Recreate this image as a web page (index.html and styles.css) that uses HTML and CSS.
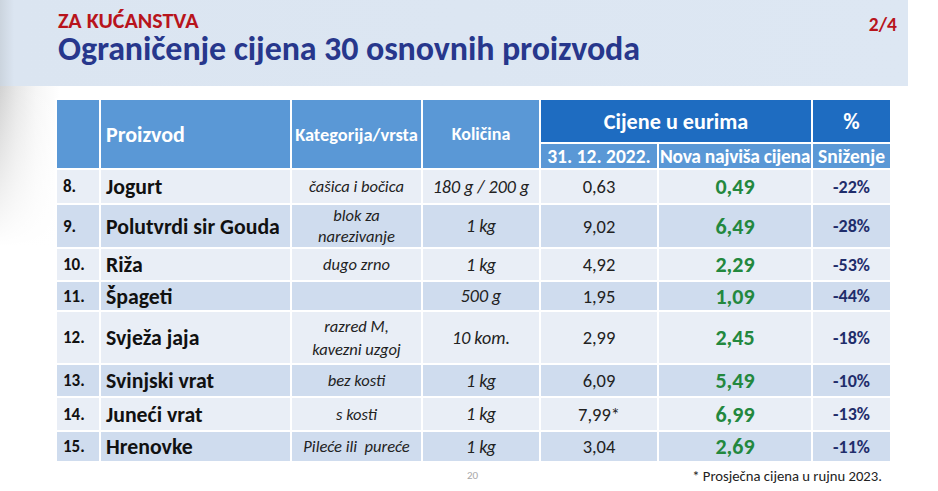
FILE: index.html
```html
<!DOCTYPE html>
<html lang="hr">
<head>
<meta charset="utf-8">
<title>Ograničenje cijena 30 osnovnih proizvoda</title>
<link rel="stylesheet" href="styles.css">
</head>
<body>
<div class="slide">
  <header class="band">
    <div class="titles">
      <div class="kicker">ZA KUĆANSTVA</div>
      <h1 class="title">Ograničenje cijena 30 osnovnih proizvoda</h1>
    </div>
    <div class="pager">2/4</div>
  </header>

  <table class="prices">
    <colgroup>
      <col class="c-num"><col class="c-name"><col class="c-cat"><col class="c-qty">
      <col class="c-old"><col class="c-new"><col class="c-pct">
    </colgroup>
    <thead>
      <tr class="h1row">
        <th rowspan="2" class="hl"></th>
        <th rowspan="2" class="hl h-name">Proizvod</th>
        <th rowspan="2" class="hl h-cat">Kategorija/vrsta</th>
        <th rowspan="2" class="hl h-qty">Količina</th>
        <th colspan="2" class="hd h-big">Cijene u eurima</th>
        <th class="hd h-pct">%</th>
      </tr>
      <tr class="h2row">
        <th class="hs">31. 12. 2022.</th>
        <th class="hs hs-tight">Nova najviša cijena</th>
        <th class="hs">Sniženje</th>
      </tr>
    </thead>
    <tbody>
      <tr class="light r35">
        <td class="num">8.</td><td class="name">Jogurt</td><td class="cat">čašica i bočica</td>
        <td class="qty">180 g / 200 g</td><td class="old">0,63</td><td class="new">0,49</td><td class="pct">-22%</td>
      </tr>
      <tr class="dark r43">
        <td class="num">9.</td><td class="name">Polutvrdi sir Gouda</td><td class="cat">blok za<br>narezivanje</td>
        <td class="qty">1 kg</td><td class="old">9,02</td><td class="new">6,49</td><td class="pct">-28%</td>
      </tr>
      <tr class="light r33">
        <td class="num">10.</td><td class="name">Riža</td><td class="cat">dugo zrno</td>
        <td class="qty">1 kg</td><td class="old">4,92</td><td class="new">2,29</td><td class="pct">-53%</td>
      </tr>
      <tr class="dark r30">
        <td class="num">11.</td><td class="name">Špageti</td><td class="cat"></td>
        <td class="qty">500 g</td><td class="old">1,95</td><td class="new">1,09</td><td class="pct">-44%</td>
      </tr>
      <tr class="light r53">
        <td class="num">12.</td><td class="name">Svježa jaja</td><td class="cat cat-tall">razred M,<br>kavezni uzgoj</td>
        <td class="qty">10 kom.</td><td class="old">2,99</td><td class="new">2,45</td><td class="pct">-18%</td>
      </tr>
      <tr class="dark r33">
        <td class="num">13.</td><td class="name">Svinjski vrat</td><td class="cat">bez kosti</td>
        <td class="qty">1 kg</td><td class="old">6,09</td><td class="new">5,49</td><td class="pct">-10%</td>
      </tr>
      <tr class="light r34">
        <td class="num">14.</td><td class="name">Juneći vrat</td><td class="cat">s kosti</td>
        <td class="qty">1 kg</td><td class="old">7,99*</td><td class="new">6,99</td><td class="pct">-13%</td>
      </tr>
      <tr class="dark r31">
        <td class="num">15.</td><td class="name">Hrenovke</td><td class="cat">Pileće ili&nbsp; pureće</td>
        <td class="qty">1 kg</td><td class="old">3,04</td><td class="new">2,69</td><td class="pct">-11%</td>
      </tr>
    </tbody>
  </table>

  <footer class="foot">
    <span class="pnum">20</span>
    <span class="note">* Prosječna cijena u rujnu 2023.</span>
  </footer>
</div>
</body>
</html>
```

FILE: styles.css
```css
html, body {
  margin: 0;
  padding: 0;
}

body {
  width: 938px;
  height: 491px;
  overflow: hidden;
  background: #ffffff;
  font-family: "Carlito", "Lato", "Open Sans", sans-serif;
}

.slide {
  width: 938px;
  height: 491px;
  background:
    linear-gradient(to bottom, rgba(255,255,255,0) 0px, #ffffff 160px) 0 86px / 70px 405px no-repeat,
    linear-gradient(to right, #d2d2d2 0px, #e6e6e6 16px, #f6f6f6 36px, #ffffff 60px) 0 86px / 70px 405px no-repeat,
    #ffffff;
}

.band {
  width: 908px;
  height: 86px;
  box-sizing: border-box;
  padding: 9px 11px 0 58px;
  display: flex;
  justify-content: space-between;
  align-items: flex-start;
  background: linear-gradient(to right, #cbd4de 0px, #dbe5f1 14px, #dde7f3 100%);
}

.kicker {
  color: #b8141c;
  font-weight: 700;
  font-size: 22px;
  line-height: 23px;
}

.title {
  margin: 0;
  color: #27378c;
  font-weight: 700;
  font-size: 34px;
  line-height: 33px;
  letter-spacing: -0.1px;
}

.pager {
  color: #b8141c;
  font-weight: 700;
  font-size: 19.5px;
  line-height: 24px;
  margin-top: 3px;
}

.prices {
  margin: 12px 0 0 55px;
  width: 835px;
  border-collapse: collapse;
  table-layout: fixed;
}

.c-num { width: 44px; }
.c-name { width: 191px; }
.c-cat { width: 131px; }
.c-qty { width: 118px; }
.c-old { width: 118px; }
.c-new { width: 154px; }
.c-pct { width: 79px; }

.prices th,
.prices td {
  border: 2px solid #ffffff;
  padding: 0;
  white-space: nowrap;
}

.prices th {
  color: #ffffff;
  font-weight: 700;
}

.hl {
  background: #5a98d6;
}

.hd {
  background: #1e6cc1;
}

.hs {
  background: #5a98d6;
  font-size: 19.5px;
  line-height: 22px;
  height: 24px;
}

.hs-tight {
  letter-spacing: -0.25px;
}

.h1row .hd {
  height: 42px;
}

.h-name {
  text-align: left;
  padding-left: 5px !important;
  font-size: 22px;
}

.h-cat {
  font-size: 18.4px;
}

.h-qty {
  font-size: 18px;
}

.h-big {
  font-size: 22.2px;
}

.h-pct {
  font-size: 22.5px;
}

.light td { background: #e9eef6; }
.dark td { background: #cfdcee; }

.r30 td { height: 28px; }
.r31 td { height: 29px; }
.r33 td { height: 31px; }
.r34 td { height: 32px; }
.r35 td { height: 33px; }
.r43 td { height: 41px; }
.r53 td { height: 51px; }

.num {
  color: #111;
  font-weight: 700;
  font-size: 17px;
  padding-left: 6px !important;
}

.name {
  color: #111;
  font-weight: 700;
  font-size: 21.8px;
  padding-left: 5px !important;
}

.cat {
  color: #222;
  font-style: italic;
  font-size: 16.5px;
  line-height: 21px;
  text-align: center;
}

.cat-tall {
  line-height: 23px;
}

.qty {
  color: #222;
  font-style: italic;
  font-size: 18px;
  text-align: center;
}

.old {
  color: #222;
  font-size: 18.5px;
  text-align: center;
}

.new {
  color: #23883e;
  font-weight: 700;
  font-size: 22px;
  text-align: center;
}

.pct {
  color: #1f2d6b;
  font-weight: 700;
  font-size: 18px;
  text-align: center;
}

.foot {
  display: flex;
  align-items: center;
  height: 26px;
  padding-left: 467px;
}

.pnum {
  color: #a8a8a8;
  font-size: 11px;
  margin-top: -2px;
}

.note {
  margin-left: 214px;
  color: #222;
  font-size: 14.7px;
}
```
